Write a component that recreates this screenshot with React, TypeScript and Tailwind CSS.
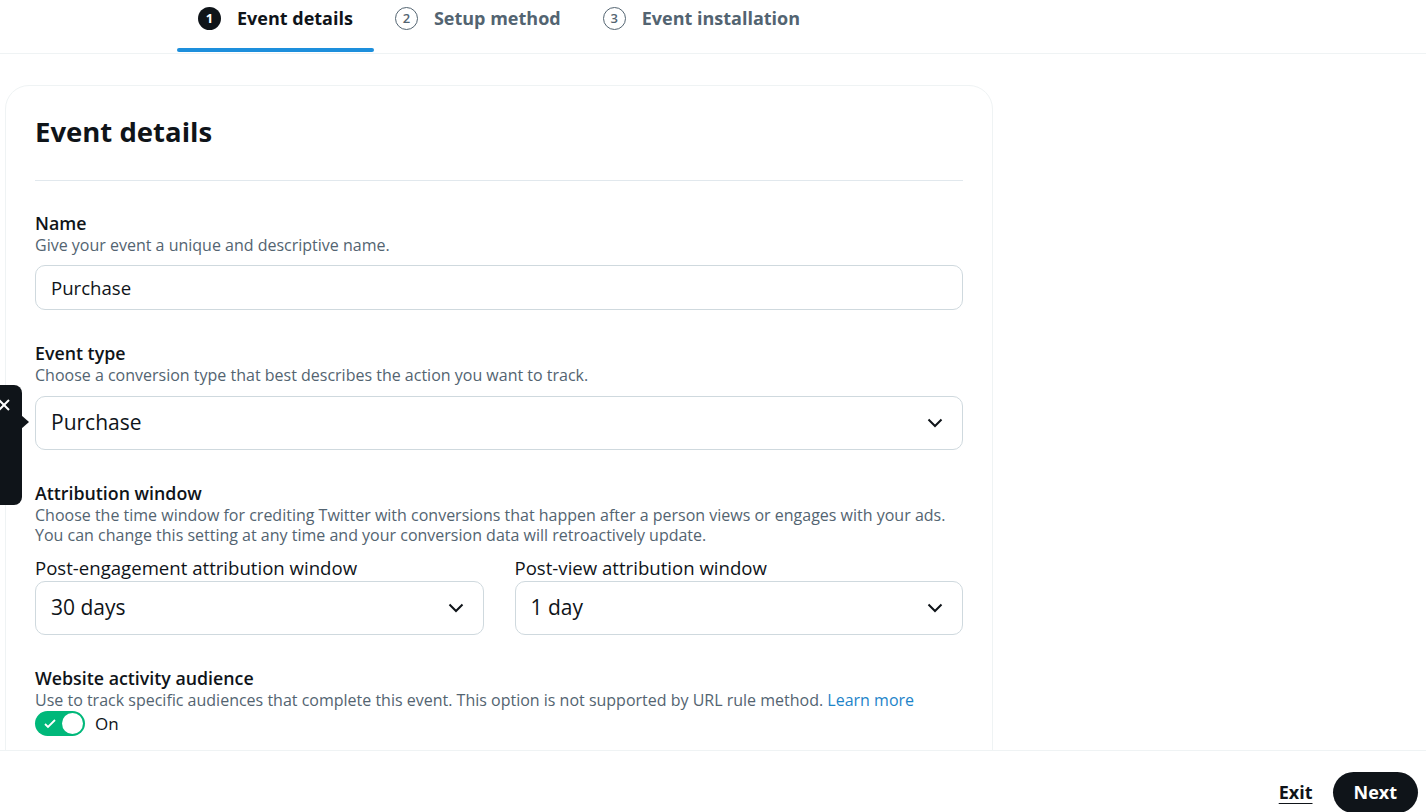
import { ReactNode } from "react";

const font = { fontFamily: '"Open Sans", "Noto Sans", sans-serif' };

const Chevron = () => (
  <svg width="16" height="10" viewBox="0 0 16 10" className="shrink-0">
    <path d="M1.5 1.5l6.5 6.5 6.5-6.5" fill="none" stroke="#0f1419" strokeWidth="2" />
  </svg>
);

type stepProp = { n: number; label: string; active?: boolean };

const Step = ({ n, label, active }: stepProp) => (
  <div className="relative flex h-[53px] items-start px-[21px] pt-[5px]">
    <div className="flex items-center gap-[16px]">
      {active ? (
        <span className="flex h-[23px] w-[23px] items-center justify-center rounded-full bg-[#0f1419] text-[13px] font-bold text-white">
          {n}
        </span>
      ) : (
        <span className="flex h-[23px] w-[23px] items-center justify-center rounded-full border border-[#536471] text-[13px] font-semibold text-[#536471]">
          {n}
        </span>
      )}
      <span
        className={
          active
            ? "text-[18px] font-bold text-[#0f1419]"
            : "text-[18px] font-bold text-[#536471]"
        }
      >
        {label}
      </span>
    </div>
    {active && (
      <div className="absolute bottom-[1px] left-0 right-0 h-[4px] rounded-full bg-[#1d8fdc]" />
    )}
  </div>
);

type fieldProp = { title: string; desc: ReactNode; children: ReactNode };

const Field = ({ title, desc, children }: fieldProp) => (
  <div className="flex flex-col">
    <h3 className="text-[17.8px] font-semibold leading-[24px] text-[#0f1419]">{title}</h3>
    <p className="text-[16px] leading-[20px] text-[#536471]">{desc}</p>
    {children}
  </div>
);

const Select = ({ value }: { value: string }) => (
  <div className="flex h-[54px] w-full items-center justify-between rounded-[10px] border border-[#cfd9de] pl-[15px] pr-[19px]">
    <span className="text-[21px] text-[#0f1419]">{value}</span>
    <Chevron />
  </div>
);

export default function App() {
  return (
    <div className="relative flex h-screen w-full flex-col overflow-hidden bg-white" style={font}>
      <nav className="flex border-b border-[#eff3f4] pl-[177px]">
        <Step n={1} label="Event details" active />
        <Step n={2} label="Setup method" />
        <Step n={3} label="Event installation" />
      </nav>

      <main className="min-h-0 flex-1 overflow-hidden pl-[5px] pt-[31px]">
        <section className="w-[988px] rounded-[24px] border border-[#eff3f4] px-[29px] pt-[28px] pb-20">
          <h2 className="text-[27.5px] font-bold leading-[36px] text-[#0f1419]">Event details</h2>
          <div className="mt-[30px] h-px bg-[#e1e8ed]" />

          <div className="mt-[30px] flex flex-col gap-[31px]">
            <Field title="Name" desc="Give your event a unique and descriptive name.">
              <div className="mt-[10px] flex h-[45px] items-center rounded-[10px] border border-[#cfd9de] px-[15px]">
                <span className="text-[18.6px] text-[#0f1419]">Purchase</span>
              </div>
            </Field>

            <Field
              title="Event type"
              desc="Choose a conversion type that best describes the action you want to track."
            >
              <div className="mt-[11px]">
                <Select value="Purchase" />
              </div>
            </Field>

            <Field
              title="Attribution window"
              desc={
                <>
                  Choose the time window for crediting Twitter with conversions that happen after a person views or engages with your ads.
                  <br />
                  You can change this setting at any time and your conversion data will retroactively update.
                </>
              }
            >
              <div className="mt-[11px] grid grid-cols-2 gap-[31px]">
                <div className="flex flex-col gap-[1px]">
                  <span className="text-[18.6px] leading-[24px] text-[#0f1419]">Post-engagement attribution window</span>
                  <Select value="30 days" />
                </div>
                <div className="flex flex-col gap-[1px]">
                  <span className="text-[18.6px] leading-[24px] text-[#0f1419]">Post-view attribution window</span>
                  <Select value="1 day" />
                </div>
              </div>
            </Field>

            <Field
              title="Website activity audience"
              desc={
                <>
                  Use to track specific audiences that complete this event. This option is not supported by URL rule method.{" "}
                  <span className="text-[#1d84c9]">Learn more</span>
                </>
              }
            >
              <div className="mt-[1px] flex items-center gap-[10px]">
                <div className="relative h-[25px] w-[50px] rounded-full bg-[#00b87a]">
                  <svg width="12" height="10" viewBox="0 0 12 10" className="absolute left-[9px] top-[8px]">
                    <path d="M1 5l3 3 7-7" fill="none" stroke="white" strokeWidth="1.8" />
                  </svg>
                  <span className="absolute right-[2px] top-[2px] h-[21px] w-[21px] rounded-full bg-white" />
                </div>
                <span className="text-[17px] text-[#0f1419]">On</span>
              </div>
            </Field>
          </div>
        </section>
      </main>

      <footer className="absolute bottom-0 left-0 right-0 flex h-[62px] items-start justify-end gap-[20px] border-t border-[#eff3f4] bg-white pr-[8px] pt-[21px]">
        <span className="mt-[8px] text-[18px] font-bold leading-[24px] text-[#0f1419] underline underline-offset-[4px]">Exit</span>
        <button className="h-[41px] rounded-full bg-[#0f1419] px-[21px] text-[18px] font-bold text-white">Next</button>
      </footer>

      <div className="absolute left-0 top-[385px] h-[120px] w-[22px] rounded-r-[8px] bg-[#0f1419]">
        <svg width="12" height="12" viewBox="0 0 12 12" className="absolute left-[-2px] top-[14px]">
          <path d="M1 1l10 10M11 1L1 11" stroke="white" strokeWidth="2" />
        </svg>
        <div className="absolute left-[21px] top-[30px] h-0 w-0 border-y-[7px] border-l-[8px] border-y-transparent border-l-[#0f1419]" />
      </div>
    </div>
  );
}
